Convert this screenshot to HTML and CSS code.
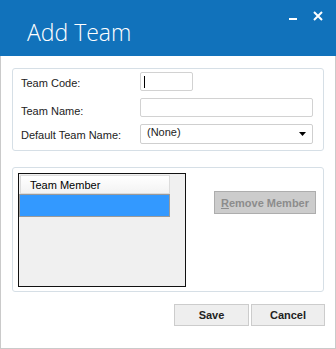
FILE: index.html
```html
<!doctype html>
<html lang="en">
<head>
    <meta charset="UTF-8">
    <title>Add Team</title>
    <link rel="stylesheet" href="styles.css">
</head>
<body>
    <div class="window">
        <!-- Title Bar -->
        <div class="titlebar">
            <h1>Add Team</h1>
            <div class="controls">
                <svg class="min" width="8" height="10" viewBox="0 0 8 10"><rect x="0" y="7" width="8" height="2" fill="#fff"/></svg>
                <svg class="close" width="10" height="10" viewBox="0 0 10 10"><path d="M1 1 L9 9 M9 1 L1 9" stroke="#fff" stroke-width="2"/></svg>
            </div>
        </div>

        <div class="content">
            <!-- Team details -->
            <div class="group details">
                <label class="l1">Team Code:</label>
                <div class="input code"><span class="caret"></span></div>
                <label class="l2">Team Name:</label>
                <div class="input name"></div>
                <label class="l3">Default Team Name:</label>
                <div class="input select">
                    <span>(None)</span>
                    <svg width="7" height="4" viewBox="0 0 7 4"><path d="M0 0 H7 L3.5 4 Z" fill="#000"/></svg>
                </div>
            </div>

            <!-- Members -->
            <div class="group members">
                <div class="listview">
                    <div class="colheader">Team Member</div>
                    <div class="row selected"></div>
                </div>
                <button class="remove" disabled><u>R</u>emove Member</button>
            </div>

            <div class="actions">
                <button>Save</button>
                <button>Cancel</button>
            </div>
        </div>
    </div>
</body>
</html>
```

FILE: styles.css
```css
/* General */
body {
    margin: 0;
    font-family: 'Liberation Sans', Arial, sans-serif;
    font-size: 11px;
    color: #222;
    background-color: #fff;
}

.window {
    width: 336px;
    height: 349px;
    box-sizing: border-box;
    border: 1px solid #cacaca;
    border-top: none;
}

/* Title bar */
.titlebar {
    height: 56px;
    margin: 0 -1px;
    background-color: #1172bb;
    display: flex;
    justify-content: space-between;
    align-items: flex-start;
}

.titlebar h1 {
    margin: 0;
    padding: 16px 0 0 27px;
    font-family: 'Open Sans', sans-serif;
    font-weight: 300;
    font-size: 23px;
    line-height: 32px;
    color: #fff;
}

.controls {
    display: flex;
    gap: 16px;
    padding: 11px 13px 0 0;
}

/* Content */
.content {
    padding: 12px 10px 0 11px;
}

.group {
    border: 1px solid #d6dfe6;
    border-radius: 3px;
    box-sizing: border-box;
    width: 312px;
}

.details {
    height: 83px;
    display: grid;
    grid-template-columns: 119px 1fr;
    grid-template-rows: 19px 19px 20px;
    row-gap: 7px;
    padding: 3px 10px 0 8px;
    align-items: center;
}

.details label {
    line-height: 13px;
}

.details .l1 { padding-top: 3px; }
.details .l2 { padding-top: 7px; }
.details .l3 { padding-top: 2px; }

.input {
    box-sizing: border-box;
    height: 100%;
    border: 1px solid #d2d2d2;
    border-radius: 2px;
    background-color: #fff;
}

.code {
    width: 53px;
    padding: 3px 0 0 3px;
}

.caret {
    display: block;
    width: 1px;
    height: 12px;
    background-color: #000;
}

.details .name {
    align-self: end;
}

.details .select {
    margin-top: -1px;
    display: flex;
    align-items: center;
    justify-content: space-between;
    padding: 0 6px 0 6px;
    border-color: #cfcfcf;
}

.select span {
    margin-top: -3px;
}

/* Members */
.members {
    margin-top: 16px;
    height: 125px;
    display: flex;
    align-items: flex-start;
    justify-content: space-between;
    padding: 5px 7px 0 5px;
}

.listview {
    width: 168px;
    height: 114px;
    box-sizing: border-box;
    border: 1px solid #111;
    background-color: #f0f0f0;
}

.colheader {
    box-sizing: border-box;
    width: 150px;
    height: 19px;
    margin: 1px 0 0 1px;
    padding: 2px 0 0 9px;
    border: 1px solid #dcdcdc;
    background: linear-gradient(#fff, #f3f3f3);
    color: #000;
    line-height: 14px;
}

.row.selected {
    box-sizing: border-box;
    width: 151px;
    height: 23px;
    background-color: #3399ff;
    border: 1px solid #9a9a9a;
}

button {
    font-family: 'Liberation Sans', Arial, sans-serif;
    font-size: 11px;
    font-weight: bold;
    padding: 0;
    border-radius: 0;
}

.remove {
    margin-top: 18px;
    width: 102px;
    height: 23px;
    background-color: #cccccc;
    border: 1px solid #adadad;
    color: #8c8c8c;
}

/* Bottom buttons */
.actions {
    display: flex;
    justify-content: flex-end;
    gap: 2px;
    margin-top: 12px;
}

.actions button {
    width: 75px;
    height: 22px;
    background-color: #eeeeee;
    border: 1px solid #cccccc;
    color: #222;
}

.actions button + button {
    width: 74px;
}
```
